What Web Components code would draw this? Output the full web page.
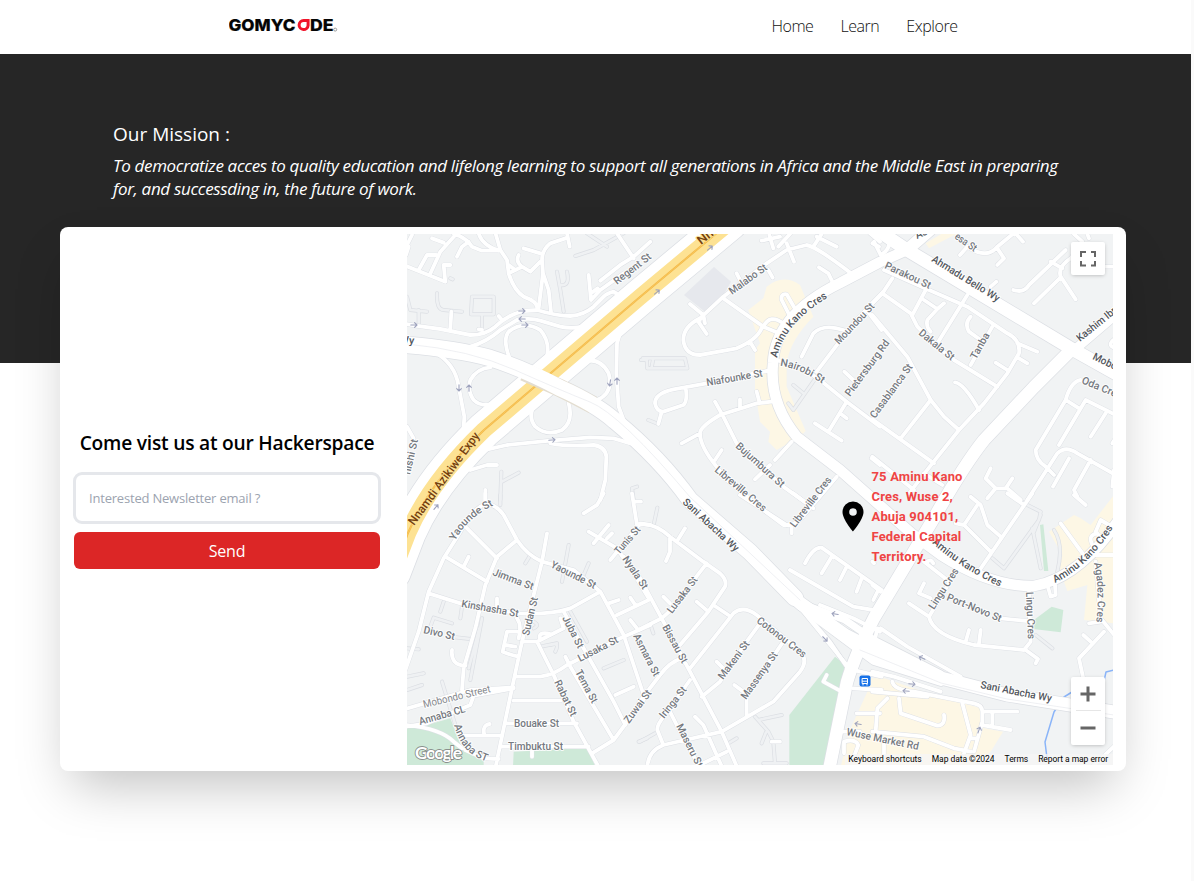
<!DOCTYPE html>
<html lang="en">
<head>
<meta charset="utf-8">
<title>GOMYCODE</title>
<style>
body{margin:0;background:#fff;font-family:"Open Sans","Noto Sans",sans-serif;color:#000}
</style>
</head>
<body>
<site-page></site-page>
<script>
const define=(name,html,setup)=>customElements.define(name,class extends HTMLElement{
  constructor(){super();this.attachShadow({mode:'open'}).innerHTML=html;if(setup)setup.call(this,this.shadowRoot);}
});

define('brand-logo',`<style>:host{display:block;width:110px;height:16px}svg{display:block}text{font:800 16px Inter,sans-serif;fill:#050505}</style>
<svg width="110" height="16" viewBox="0 0 110 16"><text x="-.5" y="14.2" textLength="67" lengthAdjust="spacingAndGlyphs" stroke="#050505" stroke-width=".2">GOMYC</text>
<path d="M80.600 2V8.400A6 6 0 1 1 74.600 2Z M77.600 5H74.600A3 3 0 1 0 77.600 8.200Z" fill="#f0142a" fill-rule="evenodd"/>
<text x="81" y="14.2" textLength="23.500" lengthAdjust="spacingAndGlyphs" stroke="#050505" stroke-width=".2">DE</text><circle cx="106.2" cy="12.6" r="1.5" fill="none" stroke="#888" stroke-width=".8"/></svg>`);

define('nav-link',`<style>:host{display:block;font-weight:300;font-size:16px;line-height:24px;white-space:nowrap;color:#111}</style><slot></slot>`);

define('site-header',`<style>:host{display:flex;justify-content:space-between;height:54px;padding:0 233.5px 0 229px;box-sizing:border-box;background:#fff}
brand-logo{margin-top:17px}nav{display:flex;gap:27px;margin-top:14px}nav-link{letter-spacing:-.45px}</style>
<brand-logo></brand-logo><nav><nav-link>Home</nav-link><nav-link>Learn</nav-link><nav-link>Explore</nav-link></nav>`);

define('mission-banner',`<style>:host{display:block;height:309px;box-sizing:border-box;background:#262626;color:#fff;padding:66px 113px 0}
h2{font-weight:400;font-size:19px;line-height:28px;margin:0;letter-spacing:0}
p{margin:6px 0 0;font-style:italic;font-size:17px;line-height:23px;white-space:nowrap;letter-spacing:-.325px}</style>
<h2><slot name="title"></slot></h2><p><slot></slot></p>`);

define('newsletter-form',`<style>:host{display:flex;flex-direction:column;width:308px;box-sizing:border-box;margin-bottom:2px}
h1{margin:0 0 15px;font-size:19.2px;font-weight:600;line-height:28px;text-align:center;white-space:nowrap;letter-spacing:-.22px}
input{box-sizing:border-box;width:308px;height:52px;border:3px solid #e5e7eb;border-radius:9px;padding:0 13px;font:13px "Open Sans","Noto Sans",sans-serif;letter-spacing:-.2px;outline:0;background:#fff}
input::placeholder{color:#9ca3af;opacity:1}
button{margin:8px 1px 0;height:37px;border:0;border-radius:6px;background:#dc2626;color:#fff;font:16px "Open Sans","Noto Sans",sans-serif;letter-spacing:-.25px;padding:1px 0 0}</style>
<h1>Come vist us at our Hackerspace</h1><input placeholder="Interested Newsletter email ?"><button>Send</button>`);

/* Map geometry: every sheet has its own origin and is drawn at three units per pixel. */
const sheets=[
{o:[407,230],
alley:'M90,190Q88,240 110,240L165,245M35,240V285M195,200H225L260,200V253H192ZM225,260V300M0,200L10,240 60,245M450,125L460,180 470,245M460,165Q490,170 480,125M505,78L560,60 650,10M540,10L600,50M283,725L280,810M285,755L335,728M690,770L675,775 680,810M702,390H720M130,145L137,148',
road:'M-3,108L40,125 115,155M35,120L60,75 88,75M68,135L100,65 145,15M115,155L110,105 130,105M75,25L110,38M-3,75L5,50M0,45L15,15M150,80L165,50 185,35M140,10Q180,25 195,50L225,62 275,62M215,10Q225,45 275,62M265,8L280,60 300,90 305,130Q320,180 350,200Q390,215 390,232M475,25L430,40Q405,60 405,90L408,130 395,235M480,10L488,50M408,130L425,180 432,245M305,130L345,110 370,125 400,95M345,110Q325,95 335,75M350,55L400,70M305,105L325,120M-3,282L25,287 100,297 190,315Q235,315 265,290Q300,255 350,243L390,240Q450,258 490,258Q530,255 560,230L590,200Q600,190 620,185Q632,190 640,205M190,350Q240,335 280,300L330,270Q370,262 400,272L460,290Q490,297 530,290M130,295L133,245M275,258L285,270M215,298L225,300M310,390Q285,330 305,305Q350,270 400,300Q435,340 415,400M250,412Q210,415 190,450Q180,480 200,510Q220,530 255,522M525,395Q580,380 605,430Q620,490 570,510Q540,515 530,505M385,520Q360,560 385,590Q420,620 465,600Q500,575 485,520M80,365Q145,400 155,470L172,560 168,620M645,290L630,340 628,430 635,530Q650,570 665,610M225,662L300,645 430,632 550,622 620,625 670,640M430,640Q480,650 560,645Q595,650 598,680L595,750 580,810M190,720L240,705 270,705M235,780V830M0,590L20,625M545,135L552,210L580,180 650,130M552,190L572,175M630,10L680,85M580,152L640,105 680,80 730,35'},
{o:[640,230],
alley:'M8,385H135L142,415H22L20,385M40,385L35,412M25,570L55,582M530,440L460,540 445,520M460,465L490,490',
road:'M380,100L250,200 180,265Q130,290 130,330Q135,375 180,375L290,355Q350,330 365,295M380,100L440,60 500,45Q530,50 640,135M250,205L370,290 430,315M150,222L190,255 175,275 200,312M190,255L195,280M330,335L345,360M470,245L440,193Q422,190 425,210L448,255M370,290Q390,250 430,280M537,112L565,130 582,165M290,130L300,150M385,120L398,143M440,40L462,95M520,50L545,12M530,20L590,50M400,55L388,15M415,50L450,12M365,32L420,20M485,380L520,310Q550,280 610,300M730,185L640,280 530,425M680,240L725,300M415,392Q480,405 540,450L620,515 720,590M620,515L565,605M525,580L605,632M600,550L620,565M613,425L640,450M395,420L200,460 100,478Q45,490 45,520Q50,545 70,545L130,525Q142,515 138,480M65,545L55,582M395,515L350,520 240,555Q180,590 180,610L125,640M225,515L250,560 290,640 430,770 500,820M180,610Q180,650 230,710L260,750 370,840 430,885H455V910M245,660L225,690M300,508V535M350,485L358,515M455,635L405,690M345,748L390,705M695,685L720,705M590,740L480,870 455,885M690,10L720,35'},
{o:[874,230],
alley:'',
road:'M55,145L25,190 -10,225M25,190L110,250 130,290 190,350M30,120L165,180 280,230 400,310Q440,330 435,370L400,430 330,520 255,600 175,700 105,790M430,340L490,365M435,385L460,400M365,398L400,420M115,255L155,180M150,210L190,237 210,220M190,237L160,270Q155,290 170,305M280,195L190,340M290,260Q270,280 285,305L320,330M355,290L290,405M190,350L240,390 370,470M243,457Q270,460 315,540M-5,255L100,380 170,510 210,560 255,600M170,510L80,625M-5,568L180,700M-5,680L120,780M150,730L205,765M258,75L280,50Q340,90 370,50L425,5M370,55L390,85 370,105M420,5L447,35M350,170L367,155M418,180Q450,190 465,165L575,60M480,220L560,142Q550,110 590,85L610,60M560,140L605,208M530,95L565,115M690,110H725M600,12L625,35M640,12L645,25M620,450Q590,455 575,510L485,660Q485,690 515,710L540,735M575,510L615,535M555,645L635,510L725,555M695,550L650,620M460,810L550,670Q575,645 610,670L725,735M585,685L537,770M650,690L600,780 610,800M720,720L715,770M350,715L335,745 365,775 340,805M365,775H400L440,810M395,775L415,745M725,325Q695,345 725,355M0,35L20,75M40,25Q55,50 25,72M-5,40L15,50M725,625L715,640'},
{o:[407,495],
alley:'M430,450Q460,440 445,470M400,455L450,445M485,150L465,260M545,205L530,240M355,205L370,180M110,320L100,350M165,335L160,370M70,395L80,368L135,385M225,370L190,555M217,400L185,520M130,425L190,432M0,460L35,463M0,545L50,535M0,585L45,570M105,560L145,690M280,0V30M490,350L540,440M590,520L650,495M695,740L720,730M380,380Q400,390 380,400',
road:'M235,-5V25Q270,30 290,60L330,135Q360,180 405,200L500,225 580,290 650,420 710,600M235,27Q190,45 160,110L110,190 65,290 35,410 -5,525M175,95L270,190M330,135L270,185 235,270 205,400 170,520 165,585M115,185L240,260M170,215L185,185M65,295L160,325 330,355Q430,360 490,340L580,290M420,115L405,200 380,300 345,440 315,580 265,820M330,370Q345,390 335,430M350,440L390,440 470,400 460,370M390,440L440,540 500,680 580,825M330,545H400Q440,540 480,510L640,430 730,390M475,485L490,515 620,735M470,350L530,460 620,620 655,690M625,600L680,575M630,360L725,315M605,325L635,315M670,308L685,330M545,110L630,160 650,190M560,145L605,90M600,130L615,115M610,195L700,85 730,90M675,-5L690,90M680,20H702M590,-5L570,30 530,55M330,410H300L287,470Q310,480 335,485M295,450L325,455M400,435Q390,408 430,417M270,310V345M135,465Q130,510 175,512M-5,642L190,585 320,577M-5,695L60,685 190,630 200,602 320,580M320,617H460M300,685H510M248,687Q225,690 232,720M170,722H285M285,755H545M375,765V785M175,765L230,790 275,792M-5,690Q100,700 140,740L165,760M555,775L620,735 720,600M670,375L690,400M650,185L725,310'},
{o:[640,495],
alley:'M52,38L42,85M0,740L45,715M345,665L385,710 400,740 405,805M355,675L425,660M365,745L378,712M370,805H440M265,745L290,730M30,385L40,415',
road:'M-5,90Q40,80 90,125L190,200 240,235Q262,255 255,275L205,350 120,450M78,198L90,170 90,125M110,140L135,100M200,205L165,250M170,320L205,350M220,330L265,360M65,370L-5,405M65,370L110,330M70,305L90,325M-5,240L65,370 150,530 245,710 295,825M150,520L280,355Q310,330 350,360L470,460Q510,490 480,530L400,620 245,710 70,750Q20,770 22,825M185,605L240,560 320,440 360,385M230,500L250,520M430,440L320,600 320,660M283,570L310,590M125,490Q90,500 60,540L-5,625M150,555L75,660Q50,690 52,705L70,750M165,665L190,690 250,825M190,805L260,770M85,640L110,690 175,810M395,740H420M300,0L370,45 440,90M460,-5L520,40M495,205Q520,155 545,158L725,285M575,185L545,235M620,215L600,255M665,250L650,290M715,285L700,315M450,225L640,335L700,345M560,540L550,560 605,590M640,580L725,585M650,655H720M610,710L660,710M612,775V740Q645,730 655,750L640,790M540,330L640,370 720,410M490,350L620,510M620,520L725,545'},
{o:[874,495],
alley:'M400,-5L460,30 500,50 495,75 390,220 355,190M475,100L500,220M500,60L480,110M540,105Q570,150 550,230M485,420L535,460',
road:'M475,-5L310,235M400,-5L450,30M310,30L270,90 350,170M290,5L320,30 340,90 380,125M270,90L245,85M560,85L640,195M600,0L635,30M150,200L220,255M160,200Q170,190 178,205M165,365L105,325M245,230L165,365Q175,420 300,450L450,465 470,440 465,290M455,465L492,492 485,505M150,265L135,295 170,310M275,440L285,405M315,445L320,405M380,370L460,378M523,280L530,305 545,300 543,270M650,180H725M665,200L680,370 725,425M645,385L680,380M690,410L615,490 630,560M628,420L650,440M655,150Q640,120 670,115L690,140M665,110L680,75 705,90 695,120M20,400L100,455 260,545M-5,530L60,545 200,590M55,560Q60,585 120,590L300,625Q325,630 325,650H430M-5,590L160,605M75,610L80,655 190,692Q215,690 210,660M40,610L10,640 5,710M-5,710L150,725 240,760 290,770M265,625L290,720 270,775M325,650V690L410,705M325,680L300,770M355,655V690M-5,10L35,40M-5,270L20,290M650,820L725,750M-5,470L10,400M-5,200L0,205M30,740V780M290,730L310,730'}
];
const trunk=[
['M395,344L407,345Q456,349 490,358Q525,369 560,388Q596,404 615,421Q660,458 690,500L750,552 795,598',16.5],
['M790,594L800,603 845,635 874,650 941,678 1007,695 1120,713',13],
['M800,607L830,642 849,670',4],['M800,603L845,620 874,640 941,674',7],['M800,606L874,661 941,682',8],
['M870,225L907,250 1072,349 1120,376',13],
['M907,250L880,262 840,283Q775,315 773,363Q769,403 797,437L840,470 911,533 941,555Q991,587 1034,586Q1080,578 1120,518',10.5],
['M1072,349L1034,387 984,440Q964,465 934,518L874,618Q855,655 847,682L828,775',12.5],
['M1072,352L1120,311',9],['M907,250L930,230',12]
];
/* text, start x/y, end x/y, style, optional curve control point */
const labels=[
['Regent St',617,285,652,258],['Malabo St',732,295,768,269],['Niafounke St',707,386,763,376.5],['Nairobi St',780,366,820,382,'',800,368],
['Aminu Kano Cres',777,358,820,302,'b',784,323],['Moundou St',839,345,875,307],['Pietersburg Rd',850,397,890,343],['Casablanca St',875,419,913,367],
['Parakou St',884,268,929,289],['Ahmadu Bello Wy',931,261,997,302,'b'],['Dakala St',918,334,951,361],['Tanba',976,360,990,335],
['Kashim Ibr',1080,342,1117,312,'b'],['Mobo',1092,359,1115,370,'b'],['Oda Cre',1081,383,1115,397],['esa St',954,238,974,252],['As',917,239,928,234,'b'],
['Nnam',701,245,729,223,'e'],['Wy',399,343,414,344,'b'],['hishi St',410,475,418,440],['Nnamdi Azikiwe Expy',414,526,480,436,'e'],
['Bujumbura St',735,447,781,488],['Libreville Cres',714,471,763,512],['Libreville Cres',795,528,832,480],['Sani Abacha Wy',682,503,735,552,'b'],
['Tunis St',619,555,641,530],['Nyala St',622,559,643,590],['Yaounde St',455,541,488,508,'',466,519],['Yaounde St',550,567,594,589],['Jimma St',492,575,532,590],
['Kinshasha St',461,607,518,617],['Sudan St',529,636,538,598],['Divo St',423,633,454,640],['Juba St',562,618,578,649],['Lusaka St',580,662,619,642],
['Tema St',575,672,592,704],['Rabat St',554,682,571,717],['Asmara St',633,636,654,677],['Mobondo Street',424,708,491,692,'l'],['Annaba CL',420,725,466,712],
['Annaba ST',454,725,484,761,'',462,756],['Bouake St',514,727,559,727],['Timbuktu St',508,750,563,750],['Zuwai St',629,724,652,693],
['Lusaka St',672,614,698,580],['Bissau St',662,627,682,664],['Iringa St',664,719,687,690],['Maseru St',676,726,697,768],['Makeni St',723,680,750,644],
['Massenya St',746,700,778,655],['Cotonou Cres',756,622,803,658],['Aminu Kano Cres',932,543,998,586,'b',960,569],['Aminu Kano Cres',1055,583,1112,530,'b',1092,565],
['Lingu Cres',934,610,959,571],['Lingu Cres',1026,592,1028,639],['Port-Novo St',946,600,1000,622],['Agadez Cres',1094,563,1097,616,'',1100,590],
['Sani Abacha Wy',980,688,1051,702,'b'],['Wuse Market Rd',846,735,918,750]
];
const arrows=[[522,311,0],[522,319,180],[525,325,0],[414,325,0],[459,388,90],[469,388,-90],[610,383,100],[617,381,-90],[552,440,-5],[657,292,-40],[710,248,-40],[436,507,-50],[835,614,190],[825,639,45],[858,724,190],[922,658,205],[912,684,5],[906,691,185],[979,730,-70]];

define('street-map',`<style>:host{display:block;width:706px;height:531px;position:relative;overflow:hidden;background:#f1f3f4}
svg{display:block}text{font:500 10.5px Roboto,sans-serif;fill:#757980;stroke:#fff;stroke-width:2px;stroke-opacity:.85;paint-order:stroke;stroke-linejoin:round}
.b{fill:#53575d}.e{fill:#74400f;font-size:12px;stroke:#fde293}.l{fill:#85888d;font-weight:400}
.g{font:700 17.5px Lato,sans-serif;fill:#fff;stroke:#777;stroke-width:1.8px;stroke-opacity:.8}
path{stroke-linecap:round;stroke-linejoin:round}</style>
<svg width="706" height="531" viewBox="407 234 706 531" fill="none"></svg><slot></slot>`,function(root){
  const layer=(k,color,w)=>sheets.map(s=>`<path transform="translate(${s.o}) scale(.33333)" d="${s[k]}" stroke="${color}" stroke-width="${w}"/>`).join('');
  const area=(i,c,d)=>`<path transform="translate(${sheets[i].o}) scale(.33333)" d="${d}" fill="${c}"/>`;
  const Y='#fdf7e5',G='#cee9d8';
  let h='<g>'+
   area(1,'#e6e8ed','M132,195L222,111 273,155 250,195 195,245Z')+
   area(1,Y,'M325,240L370,205 380,170Q430,130 480,165L520,260Q450,330 440,400V470L497,603 480,620 410,660 385,635 390,605 360,575 345,480V360L360,340Z')+
   area(2,Y,'M155,40L205,10H250L165,55Z')+
   area(3,G,'M0,695L60,690 130,670 165,760 230,790V815H0ZM320,770L540,758 565,815H318Z')+
   area(4,G,'M448,660L585,485 625,515 630,560 555,815H448Z')+
   area(5,G,'M498,90L508,88 523,228 510,228ZM480,375L533,335 568,345 560,412 478,402Z')+
   area(5,Y,'M525,110L600,60 620,70 650,90 720,0V385L630,375 640,270 580,288 555,220 565,180ZM-20,550L30,550 150,590 320,640 330,700 387,710 350,770 290,815H-100L-70,700 -20,590Z')+'</g>';
  h+=`<path d="M1114,670L1106,672 1102,690M1072,692L1064,697 1054,712 1045,742 1047,758" stroke="#8ab4f8" stroke-width="1.5"/>`;
  h+=layer('alley','#dbdee3',12)+layer('alley','#eff1f3',8)+layer('road','#dcdfe4',14);
  const ex='M730,222L706,242 640,297 545,378 484,430Q430,482 408,533L393,572';
  h+=trunk.map(t=>`<path d="${t[0]}" stroke="#dcdfe4" stroke-width="${t[1]+1.4}"/>`).join('');
  h+=`<path d="${ex}" stroke="#dcdfe4" stroke-width="37"/><path d="${ex}" stroke="#fff" stroke-width="35.5"/>`;
  h+=layer('road','#fff',11.5);
  h+=`<path d="${ex}" stroke="#fde293" stroke-width="16.5"/><path d="${ex}" stroke="#f2b84a" stroke-width="2"/><path d="${ex}" stroke="#fccf62" stroke-width=".7"/>`;
  h+=`<path d="M524,372L560,388 593,405" stroke="#e3ddd0" stroke-width="18" style="stroke-linecap:butt"/>`;
  h+=trunk.map(t=>`<path d="${t[0]}" stroke="#fff" stroke-width="${t[1]}"/>`).join('');
  h+=`<path d="M407,344Q470,350 515,370T590,402T690,497L800,600M860,650L941,683 1007,699 1114,715" stroke="#e8eaee" stroke-width=".7"/>`;
  h+=arrows.map(a=>`<path transform="translate(${a[0]} ${a[1]}) rotate(${a[2]})" d="M-3.2,0H3M.6,-2.3L3,0 .6,2.3" stroke="#9ea3bd" stroke-width="1.1"/>`).join('');
  labels.forEach((l,i)=>{
    const [t,x,y,u,v,c='',p,q]=l,len=Math.hypot(u-x,v-y);
    if(p) h+=`<path id="c${i}" d="M${x},${y}Q${p},${q} ${u+(u-p)*.3},${v+(v-q)*.3}"/><text class="${c}"><textPath href="#c${i}">${t}</textPath></text>`;
    else h+=`<text class="${c}" transform="translate(${x} ${y}) rotate(${Math.atan2(v-y,u-x)*180/Math.PI})" textLength="${len}" lengthAdjust="spacingAndGlyphs">${t}</text>`;
  });
  h+=`<rect x="859.5" y="675.5" width="11" height="11" rx="2" fill="#1a73e8"/><path d="M862.5,678.5H867.5V683.5H862.5ZM862.5,681.2H867.5M863,685V684M867,685V684" stroke="#fff" stroke-width="1"/>`;
  h+=`<text class="g" x="415" y="759" textLength="47">Google</text>`;
  root.querySelector('svg').innerHTML=h;
});

define('map-marker',`<style>:host{position:absolute;left:435px;top:233px;display:flex;gap:7.5px;align-items:center}
svg{flex:none;margin-bottom:2px}p{margin:0;width:100px;font:700 13px/20px Roboto,sans-serif;letter-spacing:.16px;color:#ef4444;white-space:nowrap}</style>
<svg width="22" height="31" viewBox="0 0 22 31"><path fill-rule="evenodd" d="M11 .5A10.5 10.5 0 0 0 .5 11C.5 18.5 11 30.5 11 30.5S21.500 18.500 21.500 11A10.500 10.500 0 0 0 11 .5ZM11 7.200A3.800 3.800 0 1 1 11 14.800A3.800 3.800 0 0 1 11 7.200Z"/></svg><p><slot></slot></p>`);

define('map-controls',`<style>:host{position:absolute;right:8px;top:8px;bottom:20px;display:flex;flex-direction:column;justify-content:space-between}
div{width:34px;background:#fff;border-radius:2px;box-shadow:0 1px 4px -1px rgba(0,0,0,.3)}svg{display:block}</style>
<div><svg width="34" height="33" viewBox="0 0 34 33"><path d="M10 15V10H15M20 10H24V15M24 19V23.500H20M15 23.500H10V19" fill="none" stroke="#666" stroke-width="2"/></svg></div>
<div><svg width="34" height="68" viewBox="0 0 34 68"><path d="M9.500 17H24.500M17 9.500V24.500M9.500 51H24.500" stroke="#666" stroke-width="3"/><path d="M5 33.500H30" stroke="#e6e6e6"/></svg></div>`);

define('map-credits',`<style>:host{position:absolute;right:0;bottom:0;height:11px;display:flex;gap:10px;padding:0 5px 0 3px;background:rgba(245,245,245,.75);font:8.5px/11px Roboto,sans-serif;letter-spacing:-.06px;color:#000;white-space:nowrap}</style>
<span style="letter-spacing:-.02px">Keyboard shortcuts</span><span>Map data ©2024</span><span>Terms</span><span>Report a map error</span>`);

define('visit-card',`<style>:host{display:flex;align-items:center;justify-content:space-between;position:relative;box-sizing:border-box;width:1066px;height:544px;margin:-136px 0 0 60px;padding:1px 13px 0;background:#fff;border-radius:8px;box-shadow:0 25px 50px -12px rgba(0,0,0,.25)}</style><slot></slot>`);

define('site-page',`<style>:host{display:block;width:1191px;height:881px;border-right:3px solid #fafafa;overflow:hidden}</style>
<site-header></site-header>
<mission-banner><span slot="title">Our Mission :</span>To democratize acces to quality education and lifelong learning to support all generations in Africa and the Middle East in preparing<br>for, and successding in, the future of work.</mission-banner>
<visit-card><newsletter-form></newsletter-form><street-map>
<map-marker>75 Aminu Kano<br>Cres, Wuse 2,<br>Abuja 904101,<br>Federal Capital<br>Territory.</map-marker><map-controls></map-controls><map-credits></map-credits></street-map></visit-card>`);
</script>
</body>
</html>
